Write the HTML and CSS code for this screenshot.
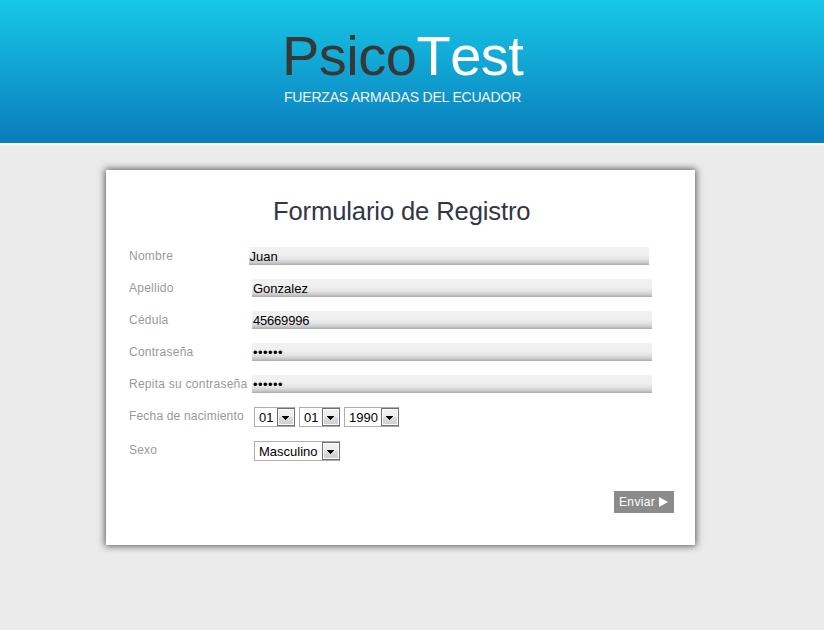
FILE: index.html
```html
<!DOCTYPE html>
<html lang="es">
<head>
<meta charset="utf-8">
<title>PsicoTest</title>
<link rel="stylesheet" href="styles.css">
</head>
<body>
<header class="header">
  <div class="brand">
    <h1 class="logo">Psico<span class="logo-alt">Test</span></h1>
    <p class="tagline">FUERZAS ARMADAS DEL ECUADOR</p>
  </div>
</header>
<main class="card">
  <h2 class="title">Formulario de Registro</h2>
  <form class="form">
    <div class="row first"><label class="label">Nombre</label><div class="field">Juan</div></div>
    <div class="row"><label class="label">Apellido</label><div class="field">Gonzalez</div></div>
    <div class="row"><label class="label">Cédula</label><div class="field digits">45669996</div></div>
    <div class="row"><label class="label">Contraseña</label><div class="field dots">••••••</div></div>
    <div class="row"><label class="label">Repita su contraseña</label><div class="field dots">••••••</div></div>
    <div class="row dates">
      <label class="label tight">Fecha de nacimiento</label>
      <div class="selects">
        <div class="select day"><span>01</span><svg class="arrow" viewBox="0 0 18 18"><use href="#drop"/></svg></div>
        <div class="select day"><span>01</span><svg class="arrow" viewBox="0 0 18 18"><use href="#drop"/></svg></div>
        <div class="select year"><span>1990</span><svg class="arrow" viewBox="0 0 18 18"><use href="#drop"/></svg></div>
      </div>
    </div>
    <div class="row sex">
      <label class="label tight">Sexo</label>
      <div class="selects">
        <div class="select gender"><span>Masculino</span><svg class="arrow" viewBox="0 0 18 18"><use href="#drop"/></svg></div>
      </div>
    </div>
    <button class="send" type="button"><span>Enviar</span><svg class="play" viewBox="0 0 9 10"><path d="M0 0L9 5L0 10Z" fill="#fff"/></svg></button>
  </form>
</main>
<svg class="defs" width="0" height="0">
  <defs>
    <linearGradient id="face" x1="0" y1="0" x2="0" y2="1">
      <stop offset="0" stop-color="#f2f2f2"/><stop offset=".5" stop-color="#ebebeb"/><stop offset=".5" stop-color="#dddddd"/><stop offset="1" stop-color="#cfcfcf"/>
    </linearGradient>
    <g id="drop" shape-rendering="crispEdges">
      <rect width="18" height="18" fill="#707070"/>
      <rect x="1" y="1" width="16" height="16" fill="#fcfcfc"/>
      <rect x="2" y="2" width="14" height="14" fill="url(#face)"/>
      <path d="M5 8h7v1h-1v1h-1v1h-1v1h-1v-1h-1v-1h-1v-1h-1z" fill="#000"/>
    </g>
  </defs>
</svg>
</body>
</html>
```
FILE: styles.css
```css
* { box-sizing: border-box; }
body {
  margin: 0;
  min-height: 630px;
  background: #ebebeb;
  font-family: "Liberation Sans", Arial, sans-serif;
}
.header {
  height: 145px;
  padding: 24px 0 0 281px;
  border-bottom: 2px solid #fff;
  background: linear-gradient(#17c8e7, #0a7cbc);
}
.logo {
  margin: 0 0 0 1px;
  font-size: 56px;
  line-height: 64px;
  font-weight: normal;
  font-kerning: none;
  letter-spacing: -.5px;
  color: #373737;
}
.logo-alt { color: #fff; }
.tagline {
  margin: 1px 0 0 3px;
  font-size: 14px;
  line-height: 16px;
  letter-spacing: -.19px;
  color: #f3f3f3;
}
.card {
  width: 589px;
  height: 375px;
  margin: 25px 0 0 106px;
  padding: 26px 21px 0 23px;
  background: #fff;
  box-shadow: 0 0 7px 1px #555;
}
.title {
  margin: 0;
  padding-left: 144px;
  font-size: 25.6px;
  line-height: 30px;
  font-weight: normal;
  letter-spacing: -.13px;
  color: #333645;
  white-space: nowrap;
}
.form { display: flex; flex-direction: column; padding-top: 21px; }
.row { display: flex; height: 32px; }
.label {
  width: 123px;
  flex: none;
  font-size: 12px;
  line-height: 18px;
  letter-spacing: .25px;
  color: #999;
  white-space: nowrap;
}
.tight { letter-spacing: .18px; }
.first .label { width: 120px; }
.field {
  width: 400px;
  height: 18px;
  padding-left: 1px;
  font-size: 13px;
  line-height: 19px;
  color: #000;
  background: linear-gradient(#f1f1f1 0, #efefef 45%, #e2e2e2 70%, #c8c8c8 88%, #a8a8a8 100%);
}
.digits { letter-spacing: -.2px; }
.dots { letter-spacing: .45px; }
.selects { display: flex; gap: 4px; padding-left: 2px; }
.first .field { padding-left: .5px; }
.select {
  display: flex;
  justify-content: space-between;
  height: 20px;
  padding-left: 4px;
  border: 1px solid #abadb3;
  border-right-color: #707070;
  font-size: 13px;
  line-height: 19px;
  color: #000;
  background: #fff;
}
.day { width: 41px; }
.year { width: 55px; }
.gender { width: 86px; }
.arrow { width: 18px; height: 18px; margin-right: -1px; }
.dates { height: 34px; }
.send {
  display: flex;
  align-items: center;
  align-self: flex-end;
  width: 60px;
  height: 22px;
  margin-top: 18px;
  padding: 0 5px;
  border: 0;
  background: #8b8b8b;
  color: #fff;
  font: 12px/22px "Liberation Sans", Arial, sans-serif;
  letter-spacing: .35px;
}
.play { width: 9px; height: 10px; margin-left: 4px; }
.defs { position: absolute; }
```
